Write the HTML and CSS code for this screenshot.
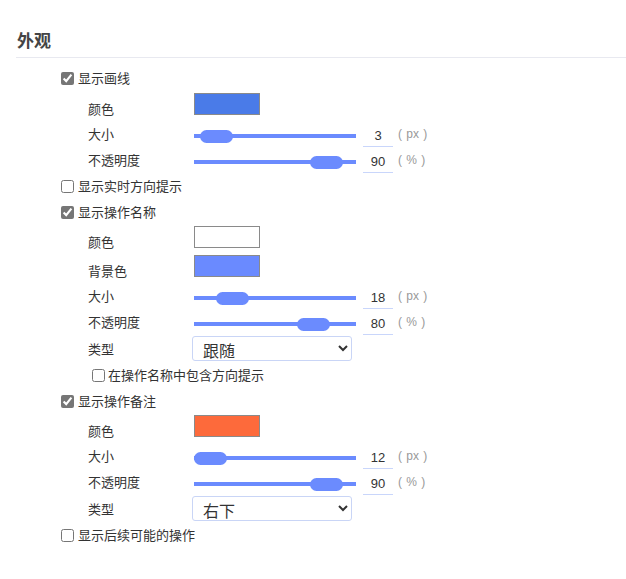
FILE: index.html
```html
<!DOCTYPE html>
<html lang="zh-CN">
<head>
<meta charset="utf-8">
<title>外观</title>
<link rel="stylesheet" href="styles.css">
</head>
<body>
<div class="panel">
  <h2 class="title">外观</h2>
  <div class="group">
    <label class="check"><input type="checkbox" checked><span>显示画线</span></label>
    <div class="field color-field first"><span class="label">颜色</span><span class="swatch swatch-blue"></span></div>
    <div class="field"><span class="label">大小</span><input class="slider" type="range" min="2" max="23" value="3"><input class="num" type="text" value="3"><span class="unit">( px )</span></div>
    <div class="field"><span class="label">不透明度</span><input class="slider" type="range" min="0" max="100" value="90"><input class="num" type="text" value="90"><span class="unit">( % )</span></div>

    <label class="check"><input type="checkbox"><span>显示实时方向提示</span></label>

    <label class="check"><input type="checkbox" checked><span>显示操作名称</span></label>
    <div class="field color-field"><span class="label">颜色</span><span class="swatch swatch-white"></span></div>
    <div class="field color-field"><span class="label">背景色</span><span class="swatch swatch-light"></span></div>
    <div class="field"><span class="label">大小</span><input class="slider" type="range" min="12" max="48" value="18"><input class="num" type="text" value="18"><span class="unit">( px )</span></div>
    <div class="field"><span class="label">不透明度</span><input class="slider" type="range" min="0" max="100" value="80"><input class="num" type="text" value="80"><span class="unit">( % )</span></div>
    <div class="field select-field"><span class="label">类型</span><select class="select"><option>跟随</option></select></div>
    <label class="check sub"><input type="checkbox"><span>在操作名称中包含方向提示</span></label>

    <label class="check"><input type="checkbox" checked><span>显示操作备注</span></label>
    <div class="field color-field"><span class="label">颜色</span><span class="swatch swatch-orange"></span></div>
    <div class="field"><span class="label">大小</span><input class="slider" type="range" min="12" max="48" value="12"><input class="num" type="text" value="12"><span class="unit">( px )</span></div>
    <div class="field"><span class="label">不透明度</span><input class="slider" type="range" min="0" max="100" value="90"><input class="num" type="text" value="90"><span class="unit">( % )</span></div>
    <div class="field select-field"><span class="label">类型</span><select class="select"><option>右下</option></select></div>

    <label class="check"><input type="checkbox"><span>显示后续可能的操作</span></label>
  </div>
</div>
</body>
</html>
```
FILE: styles.css
```css
* { box-sizing: border-box; }
html, body { margin: 0; padding: 0; background: #fff; }
body {
  font-family: "Noto Sans CJK SC", "Liberation Sans", sans-serif;
  font-size: 13px;
  color: #333;
}
.panel { padding: 28px 0 0 16px; }
.title {
  margin: 0;
  padding: 0 0 5px 1px;
  font-size: 17px;
  line-height: 24px;
  font-weight: bold;
  color: #444;
  border-bottom: 1px solid #e8e9f0;
}
.group {
  display: flex;
  flex-direction: column;
  padding: 7px 0 0 45px;
}
.check {
  display: flex;
  align-items: center;
  height: 26px;
  line-height: 18px;
}
.check input {
  margin: 0 4px 0 0;
  width: 13px;
  height: 13px;
  accent-color: #767676;
}
.check.sub { padding-left: 31px; }
.check.sub input { margin-right: 3px; }
.field {
  display: flex;
  align-items: center;
  height: 26px;
  padding-left: 27px;
}
.label {
  width: 106px;
  flex: none;
  line-height: 18px;
}
.color-field {
  height: 29px;
  align-items: flex-end;
  padding-bottom: 6px;
}
.color-field.first {
  height: 30px;
}
.color-field .label { line-height: 16px; margin-bottom: -2px; }
.select-field { height: 27px; }
.swatch {
  display: block;
  width: 66px;
  height: 22px;
  border: 1px solid #8a8a8a;
}
.swatch-blue { background: #4a7be8; }
.swatch-white { background: #fff; }
.swatch-light { background: #6a8aff; }
.swatch-orange { background: #fd6a3b; }
.slider {
  -webkit-appearance: none;
  appearance: none;
  width: 162px;
  height: 14px;
  margin: 4px 0 0 0;
  background: transparent;
}
.slider::-webkit-slider-runnable-track {
  height: 4px;
  background: #6b8bfe;
  border-radius: 0;
}
.slider::-webkit-slider-thumb {
  -webkit-appearance: none;
  appearance: none;
  width: 33px;
  height: 13px;
  margin-top: -4.5px;
  border-radius: 7px;
  background: #6b8bfe;
  border: none;
}
.num {
  width: 30px;
  height: 23px;
  margin: 3px 0 0 7px;
  padding: 0;
  border: none;
  border-bottom: 1px solid #c9d6fb;
  font-family: "Liberation Sans", sans-serif;
  font-size: 13px;
  color: #333;
  text-align: center;
  outline: none;
  background: transparent;
}
.unit {
  margin-left: 5px;
  font-family: "Liberation Sans", sans-serif;
  font-size: 12px;
  color: #999;
  word-spacing: 1px;
}
.select {
  width: 160px;
  height: 25px;
  margin-left: -2px;
  padding: 0 0 0 6px;
  border: 1px solid #c9d5f6;
  border-radius: 3px;
  background: #fff;
  font-family: "Noto Sans CJK SC", sans-serif;
  font-size: 16px;
  color: #333;
}
```
